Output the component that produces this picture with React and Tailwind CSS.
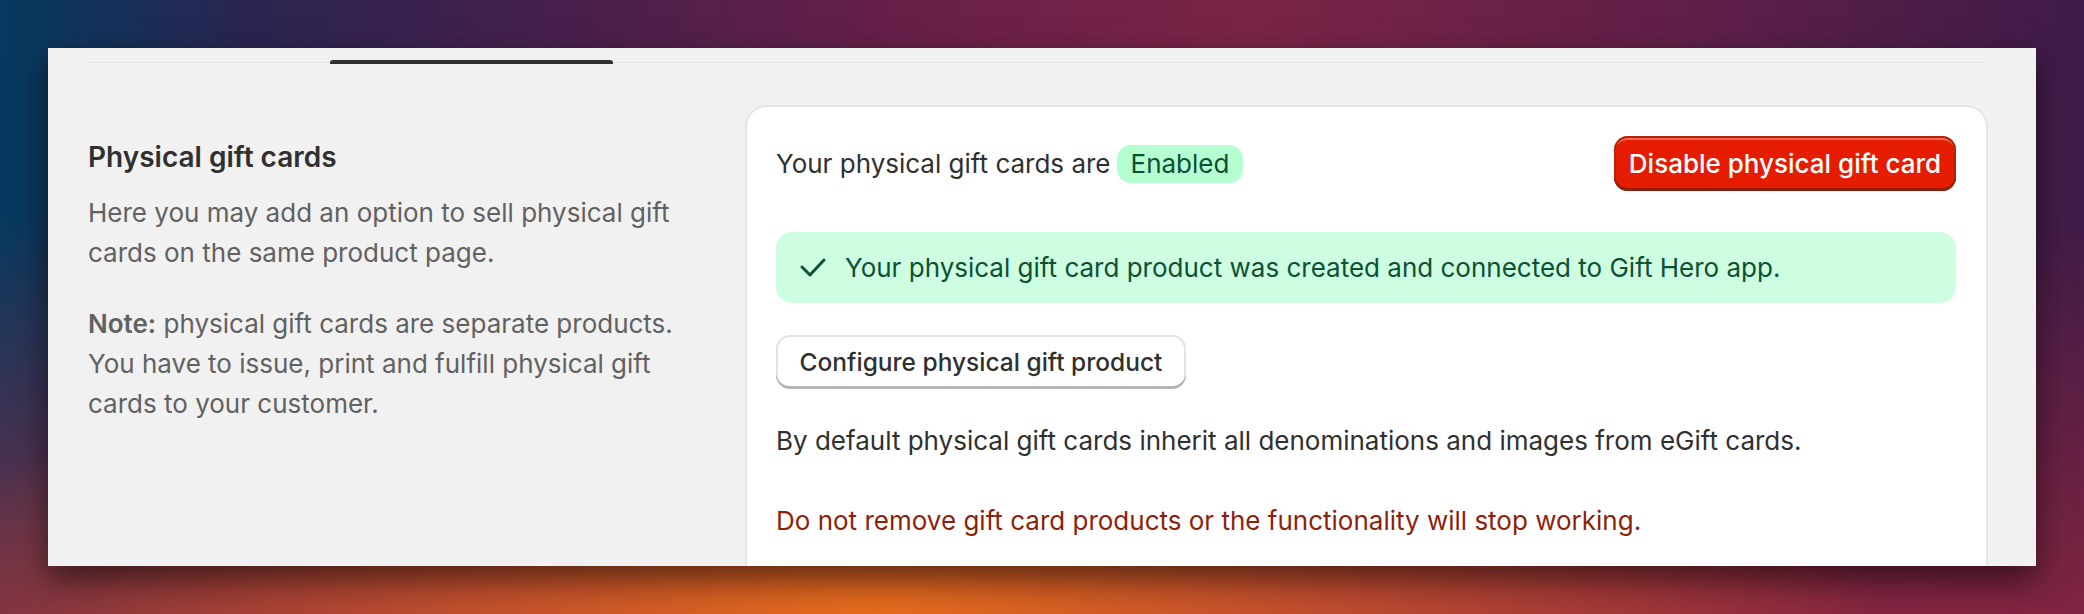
import React from "react";

function CheckIcon() {
  return (
    <svg width="28" height="28" viewBox="0 0 28 28" fill="none" className="shrink-0">
      <path d="M3 13l8 8L25 6" stroke="#0c5132" strokeWidth="3" strokeLinecap="round" strokeLinejoin="round" />
    </svg>
  );
}

export default function App() {
  return (
    <div className="w-[2084px] h-[614px] overflow-hidden pt-[48px] pl-[48px] font-[Inter,sans-serif] bg-[radial-gradient(ellipse_1000px_300px_at_42%_100%,#e66c1c_0%,rgba(210,90,40,0.8)_40%,rgba(0,0,0,0)_100%),linear-gradient(180deg,rgba(0,0,0,0)_35%,rgba(150,40,62,0.75)_100%),linear-gradient(90deg,#053a60_0%,#2a2450_12%,#4a1f4c_28%,#6a2048_45%,#7a2446_60%,#5e1f48_82%,#3e1b48_100%)]">
      <div className="w-[1988px] h-[518px] bg-[#f1f1f1] pl-[40px] pr-[48px] overflow-hidden shadow-[0_14px_30px_rgba(0,0,0,0.55)]">
        <div className="relative h-[15px] border-b border-[#e6e6e6]">
          <div className="absolute left-[242px] top-[12px] w-[283px] h-[4px] bg-[#303030] rounded-t-[3px]" />
        </div>

        <div className="flex gap-[37px] mt-[42px]">
          <div className="w-[620px] shrink-0 pt-[32px] text-[26px] leading-[40px]">
            <h2 className="text-[28px] leading-[40px] font-semibold text-[#303030]">Physical gift cards</h2>
            <p className="mt-[16px] text-[#616161]">
              Here you may add an option to sell physical gift cards on the same product page.
            </p>
            <p className="mt-[31px] text-[#616161] pr-[20px]">
              <b className="font-semibold">Note:</b> physical gift cards are separate products. You have to issue,
              print and fulfill physical gift cards to your customer.
            </p>
          </div>

          <div className="flex-1 bg-white rounded-t-[22px] border-2 border-b-0 border-[#e5e5e5] pl-[29px] pr-[30px] pt-[29px] pb-[40px] text-[26px] leading-[40px]">
            <div className="flex items-center justify-between">
              <div className="flex items-center gap-[6px] text-[#303030]">
                <span>Your physical gift cards are</span>
                <span className="h-[38px] px-[14px] rounded-[14px] bg-[#b4fed2] text-[#0c5132] flex items-center">
                  Enabled
                </span>
              </div>
              <button className="h-[55px] w-[342px] rounded-[14px] bg-[#e51c00] text-white font-medium shadow-[inset_0_-3px_0_0_#8e1f0b,inset_0_0_0_2px_#b3260c,inset_0_4px_0_0_rgba(255,255,255,0.35)]">
                Disable physical gift card
              </button>
            </div>

            <div className="mt-[41px] h-[71px] rounded-[16px] bg-[#cdfee1] flex items-center pl-[23px] gap-[18px] text-[#0c5132]">
              <CheckIcon />
              <span>Your physical gift card product was created and connected to Gift Hero app.</span>
            </div>

            <button className="mt-[32px] h-[54px] w-[410px] rounded-[14px] bg-white text-[#303030] text-[24.5px] font-medium shadow-[inset_0_-3px_0_0_#b5b5b5,inset_0_0_0_2px_#e3e3e3]">
              Configure physical gift product
            </button>

            <p className="mt-[32px] text-[#303030]">
              By default physical gift cards inherit all denominations and images from eGift cards.
            </p>
            <p className="mt-[40px] text-[#8e1f0b]">
              Do not remove gift card products or the functionality will stop working.
            </p>
          </div>
        </div>
      </div>
    </div>
  );
}
